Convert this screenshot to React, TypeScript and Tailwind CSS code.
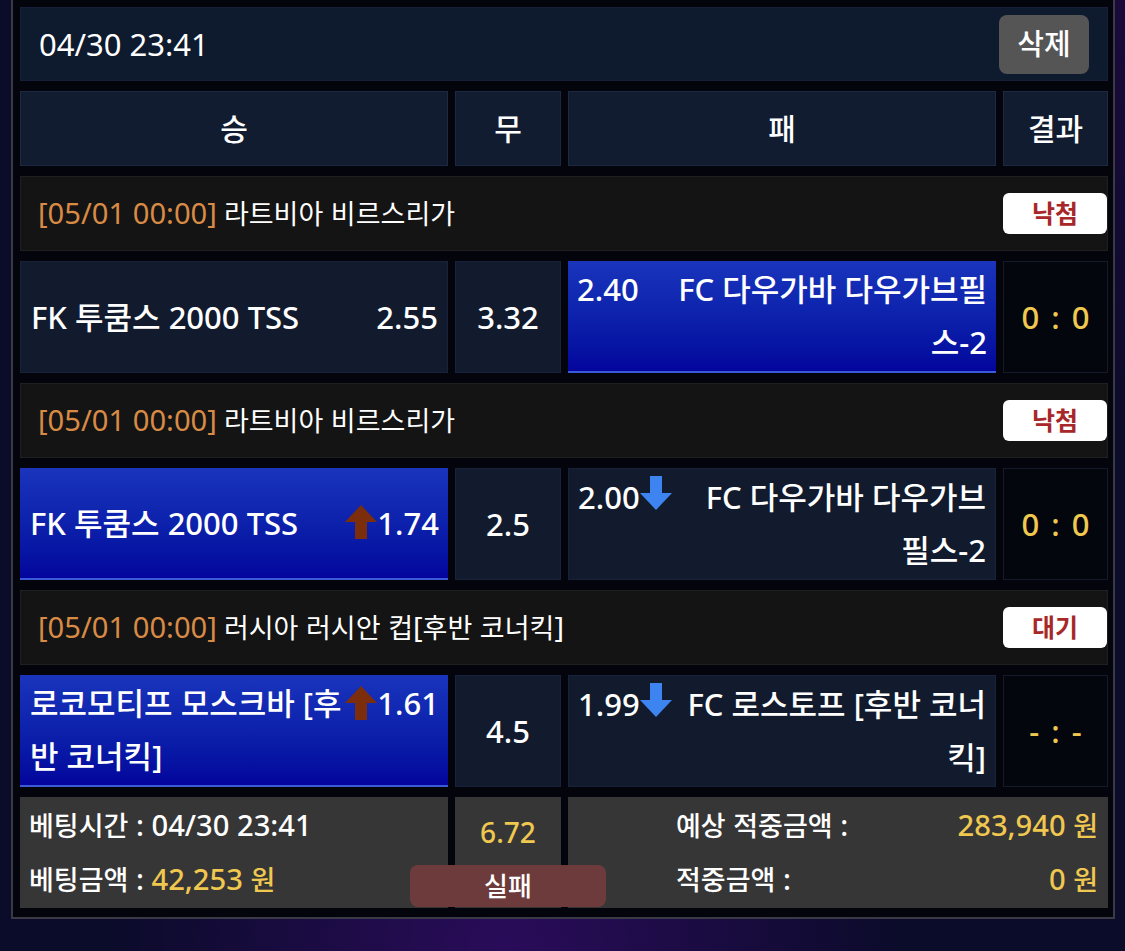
import React from 'react';

const FONT = { fontFamily: '"Noto Sans", "Noto Sans CJK KR", sans-serif' };

// Hangul runs keep the base size, everything else is drawn a bit larger
function T({ children }: { children: string }) {
  const parts = children.split(/([\u3131-\u318E\uAC00-\uD7A3]+)/);
  return (
    <>
      {parts.map((p, i) =>
        /[\u3131-\u318E\uAC00-\uD7A3]/.test(p) ? (
          <React.Fragment key={i}>{p}</React.Fragment>
        ) : (
          <span key={i} className="text-[1.08em]">
            {p}
          </span>
        ),
      )}
    </>
  );
}

function UpArrow() {
  return (
    <svg width="32" height="34" viewBox="0 0 32 34" className="inline-block align-middle -mt-2">
      <polygon points="0,17 16,0 32,17" fill="#7b2d0c" />
      <rect x="10" y="16" width="12" height="18" fill="#7b2d0c" />
    </svg>
  );
}

function DownArrow() {
  return (
    <svg width="32" height="34" viewBox="0 0 32 34" className="inline-block align-middle -mt-4">
      <rect x="10" y="0" width="12" height="18" fill="#3d84f0" />
      <polygon points="0,17 32,17 16,34" fill="#3d84f0" />
    </svg>
  );
}

type Match = {
  time: string;
  league: string;
  status: string;
  home: string;
  homeOdds: string;
  homeArrow?: boolean;
  draw: string;
  away: string;
  awayOdds: string;
  awayArrow?: boolean;
  pick: 'home' | 'away';
  score: string;
};

const matches: Match[] = [
  {
    time: '[05/01 00:00]',
    league: '라트비아 비르스리가',
    status: '낙첨',
    home: 'FK 투쿰스 2000 TSS',
    homeOdds: '2.55',
    draw: '3.32',
    away: 'FC 다우가바 다우가브필스-2',
    awayOdds: '2.40',
    pick: 'away',
    score: '0 : 0',
  },
  {
    time: '[05/01 00:00]',
    league: '라트비아 비르스리가',
    status: '낙첨',
    home: 'FK 투쿰스 2000 TSS',
    homeOdds: '1.74',
    homeArrow: true,
    draw: '2.5',
    away: 'FC 다우가바 다우가브필스-2',
    awayOdds: '2.00',
    awayArrow: true,
    pick: 'home',
    score: '0 : 0',
  },
  {
    time: '[05/01 00:00]',
    league: '러시아 러시안 컵[후반 코너킥]',
    status: '대기',
    home: '로코모티프 모스크바 [후반 코너킥]',
    homeOdds: '1.61',
    homeArrow: true,
    draw: '4.5',
    away: 'FC 로스토프 [후반 코너킥]',
    awayOdds: '1.99',
    awayArrow: true,
    pick: 'home',
    score: '- : -',
  },
];

const selected = 'bg-gradient-to-b from-[#1a34bc] to-[#04049c] border-b-2 border-[#3a5ad8]';
const normal = 'bg-[#111b2d] border border-[#18223a]';
const grid = 'grid grid-cols-[428px_106px_428px_105px] gap-x-[7px]';

function MatchBlock({ m }: { m: Match }) {
  return (
    <>
      <div className="h-[75px] bg-[#141414] border border-[#1f1f1f] flex items-center justify-between pl-[17px] pr-0">
        <div className="text-[27px] text-white">
          <span className="text-[#d98b45]">
            <T>{m.time}</T>
          </span>{' '}
          <T>{m.league}</T>
        </div>
        <div className="w-[104px] h-[41px] bg-white rounded-md flex items-center justify-center text-[25px] font-bold text-[#a8282a]">
          {m.status}
        </div>
      </div>
      <div className={`${grid} h-[112px]`}>
        <div className={`${m.pick === 'home' ? selected : normal} flex items-center pl-[10px] pr-[9px] text-[31px] font-medium text-white leading-[53px] break-all`}>
          <div className="w-full">
            <span className="float-right">
              {m.homeArrow && <UpArrow />}
              {m.homeOdds}
            </span>
            {m.home}
          </div>
        </div>
        <div className={`${normal} flex items-center justify-center text-[31px] font-medium text-white`}>{m.draw}</div>
        <div className={`${m.pick === 'away' ? selected : normal} flex items-center pl-[9px] pr-[9px] text-[31px] font-medium text-white leading-[53px] break-all`}>
          <div className="w-full text-right">
            <span className="float-left mr-[10px]">
              {m.awayOdds}
              {m.awayArrow && <DownArrow />}
            </span>
            {m.away}
          </div>
        </div>
        <div className="bg-[#04060d] border border-[#141a28] flex items-center justify-center text-[31px] font-medium text-[#f0c850] whitespace-pre [word-spacing:4px]">
          {m.score}
        </div>
      </div>
    </>
  );
}

export default function App() {
  return (
    <div
      style={FONT}
      className="min-h-[951px] w-full overflow-hidden bg-[#0b0b2a] bg-[radial-gradient(circle_at_45%_100%,#2a0c5a_0%,transparent_35%),radial-gradient(circle_at_100%_0%,#1a0a3a_0%,transparent_30%)]"
    >
      <div className="ml-[11px] w-[1104px] border-x-2 border-b-2 border-[#3a3a46] bg-[#04040c] pt-[7px] pb-[9px] pl-[7px] pr-[5px]">
        <div className="flex flex-col gap-[10px] w-[1088px]">
          <div className="h-[74px] bg-[#0e1a2d] border border-[#152038] flex items-center justify-between pl-[18px] pr-[18px]">
            <div className="text-[31px] text-white">04/30 23:41</div>
            <div className="w-[90px] h-[59px] rounded-lg bg-[#555555] flex items-center justify-center text-[29px] font-medium text-white">
              삭제
            </div>
          </div>

          <div className={`${grid} h-[75px]`}>
            {['승', '무', '패', '결과'].map((h) => (
              <div key={h} className="bg-[#121c30] border border-[#1d2940] flex items-center justify-center text-[30px] font-medium text-white">
                {h}
              </div>
            ))}
          </div>

          {matches.map((m, i) => (
            <MatchBlock key={i} m={m} />
          ))}

          <div className={`${grid} h-[111px] relative`}>
            <div className="bg-[#363636] flex flex-col justify-center gap-[10px] px-[9px] text-[27px] font-medium text-white">
              <div>
                <T>베팅시간 : 04/30 23:41</T>
              </div>
              <div>
                <T>베팅금액 : </T>
                <span className="text-[#f0c850]">
                  <T>42,253 원</T>
                </span>
              </div>
            </div>
            <div className="bg-[#363636] flex justify-center pt-[14px] text-[26px] font-medium text-[#f0c850]">
              <T>6.72</T>
            </div>
            <div className="col-span-2 bg-[#363636] flex flex-col justify-center gap-[10px] pl-[108px] pr-[10px] text-[27px] font-medium text-white">
              <div className="flex justify-between">
                <span>
                  <T>예상 적중금액 :</T>
                </span>
                <span className="text-[#f0c850]">
                  <T>283,940 원</T>
                </span>
              </div>
              <div className="flex justify-between">
                <span>
                  <T>적중금액 :</T>
                </span>
                <span className="text-[#f0c850]">
                  <T>0 원</T>
                </span>
              </div>
            </div>
            <div className="absolute left-[390px] top-[68px] w-[196px] h-[42px] rounded-lg bg-[#6d3b3b] flex items-center justify-center text-[26px] font-medium text-white">
              실패
            </div>
          </div>
        </div>
      </div>
    </div>
  );
}
